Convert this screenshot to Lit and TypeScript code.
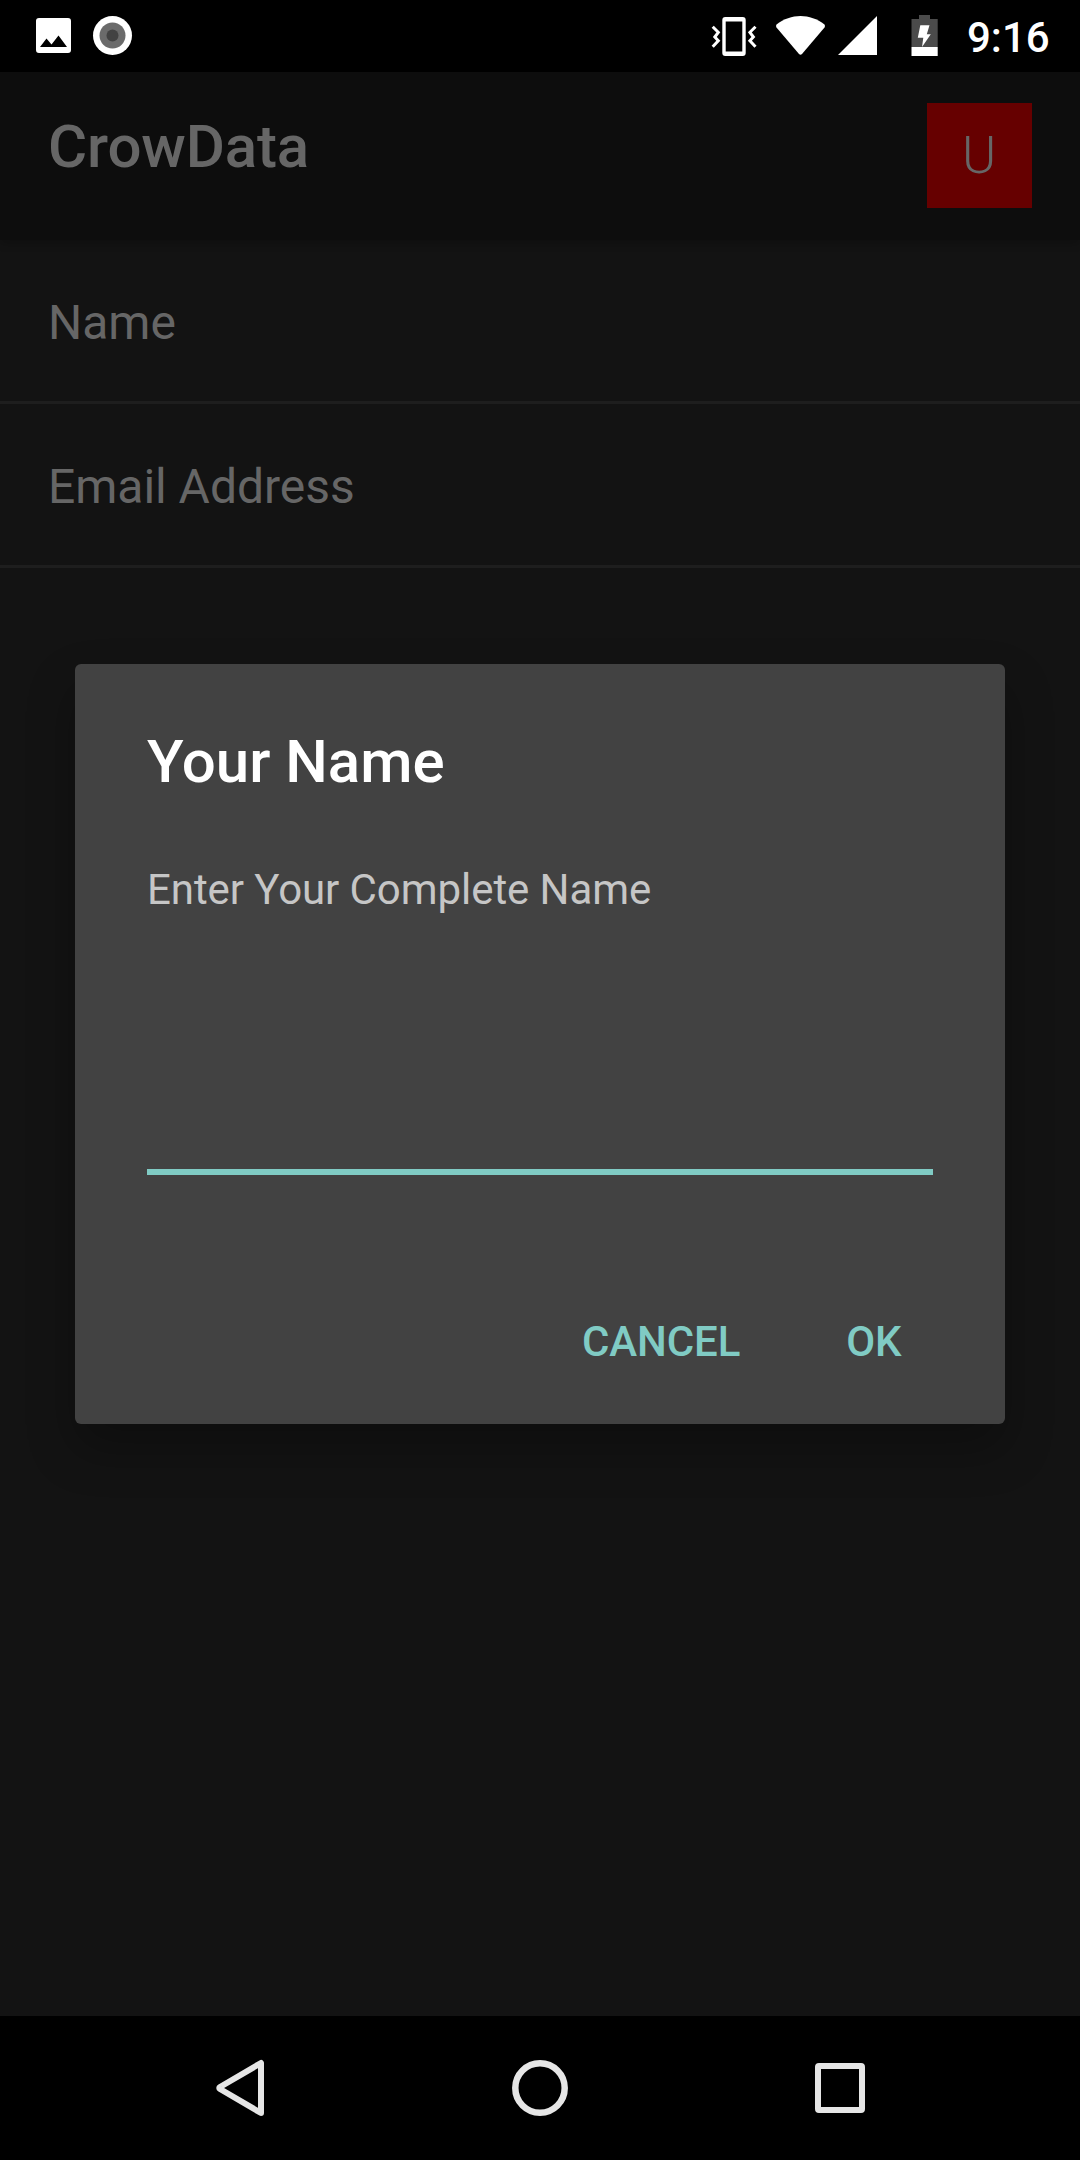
import { LitElement, html, css, svg } from "lit";
import { customElement, property } from "lit/decorators.js";

@customElement("status-bar")
class StatusBar extends LitElement {
  static styles = css`
    :host { display: flex; justify-content: space-between; height: 72px; background: #000; }
    svg { display: block; }
    .right { display: flex; }
    .clock {
      width: 113px; color: #fff; font: 500 42px/75px Roboto, sans-serif; white-space: nowrap;
    }
  `;
  render() {
    return html`
      <svg width="150" height="72" viewBox="0 0 150 72">
        <path fill="#fff" fill-rule="evenodd" d="M39 18h29a3 3 0 0 1 3 3v29a3 3 0 0 1-3 3H39a3 3 0 0 1-3-3V21a3 3 0 0 1 3-3zM40 47h27L58.500 35.600 51.500 44.500 46.500 38.500z"/>
        <circle cx="112.500" cy="35.500" r="19.500" fill="#fff"/>
        <circle cx="112.500" cy="35.500" r="13" fill="#6b6b6b"/>
        <circle cx="112.500" cy="35.500" r="6" fill="#424242"/>
      </svg>
      <div class="right">
        <svg width="259" height="72" viewBox="708 0 259 72">
          <path fill="#fff" fill-rule="evenodd" d="M725.300 17h17.400a3 3 0 0 1 3 3v33a3 3 0 0 1-3 3h-17.400a3 3 0 0 1-3-3V20a3 3 0 0 1 3-3zM725.700 21.500v30h16.600v-30z"/>
          <path d="M712.700 26.700l5.600 5.600-3.500 4.700 3.500 3.700-5.600 6M755.500 26.700l-5.600 5.600 3.500 4.700-3.500 3.700 5.600 6" fill="none" stroke="#fff" stroke-width="3"/>
          <path fill="#fff" d="M776.500 24.500C791 13 810 13 824.500 24.500q1 1.500 0 3L802 54q-1.500 1.500-3 0L776.500 27.500q-1-1.500 0-3z"/>
          <path fill="#fff" d="M838 55L877 16V55z"/>
          <path fill="#4b4b4b" d="M919 15h11v4h7.700v28H911.500V19h7.500z"/>
          <path fill="#fff" d="M911.500 47h26.200v9h-26.200zM920.300 25.300h9.200l-2.700 9h4L922 47l1.300-9.300H917.800z"/>
        </svg>
        <div class="clock">9:16</div>
      </div>`;
  }
}

@customElement("form-row")
class FormRow extends LitElement {
  @property() label = "";
  static styles = css`
    :host {
      display: block; box-sizing: border-box; height: 164px; padding-left: 48px;
      border-bottom: 3px solid #1e1e1e; color: #666; font: 400 48px/165px Roboto, sans-serif;
      letter-spacing: -0.02px;
    }
  `;
  render() {
    return html`${this.label}`;
  }
}

@customElement("name-dialog")
class NameDialog extends LitElement {
  static styles = css`
    :host {
      display: flex; flex-direction: column; box-sizing: border-box;
      width: 930px; height: 760px; padding: 60px 72px 0; border-radius: 6px;
      background: #424242; font-family: Roboto, sans-serif;
      box-shadow: 0 24px 48px rgba(0, 0, 0, 0.28);
    }
    .title { color: #fff; font-size: 60px; font-weight: 500; line-height: 75px; }
    .message { margin-top: 65px; color: #c6c6c6; font-size: 42px; line-height: 51px; letter-spacing: -0.07px; }
    .field { height: 254px; border-bottom: 6px solid #80cbc4; }
    .actions { display: flex; justify-content: flex-end; gap: 106px; margin-top: 142px; padding-right: 31.500px; }
    .action { color: #80cbc4; font-size: 42px; font-weight: 500; line-height: 50px; letter-spacing: -0.1px; }
  `;
  render() {
    return html`
      <div class="title">Your Name</div>
      <div class="message">Enter Your Complete Name</div>
      <div class="field"></div>
      <div class="actions">
        <span class="action">CANCEL</span>
        <span class="action">OK</span>
      </div>`;
  }
}

@customElement("nav-bar")
class NavBar extends LitElement {
  static styles = css`
    :host { display: flex; justify-content: center; gap: 180px; height: 144px; background: #000; }
    svg { display: block; fill: none; stroke: #e6e6e6; stroke-width: 6; stroke-linejoin: round; }
    circle { stroke-width: 6.500; }
  `;
  private icon(shape: unknown) {
    return html`<svg width="120" height="144" viewBox="0 0 120 144">${shape}</svg>`;
  }
  render() {
    return html`
      ${this.icon(svg`<path d="M81 47V97L40 73q-1.500-1 0-2z"/>`)}
      ${this.icon(svg`<circle cx="60" cy="72" r="24.700"/>`)}
      ${this.icon(svg`<rect x="38" y="50" width="44" height="44" rx="1"/>`)}`;
  }
}

@customElement("app-root")
class AppRoot extends LitElement {
  static styles = css`
    :host {
      display: flex; flex-direction: column; position: relative; width: 1080px; height: 2160px;
      overflow: hidden; background: #131313; font-family: Roboto, sans-serif;
    }
    .bar {
      display: flex; justify-content: space-between; align-items: flex-start; box-sizing: border-box;
      height: 168px; padding: 31px 48px 0; background: #0d0d0d; box-shadow: 0 4px 8px rgba(0, 0, 0, 0.2);
    }
    .title { color: #666; font-size: 60px; font-weight: 500; line-height: 87px; letter-spacing: -0.12px; }
    .avatar {
      width: 105px; height: 105px; background: #660000; color: #666;
      font-size: 52px; font-weight: 300; line-height: 105px; text-align: center; text-indent: -1px;
    }
    .list { flex: 1; }
    .overlay { position: absolute; left: 75px; top: 664px; }
  `;
  render() {
    return html`
      <status-bar></status-bar>
      <header class="bar">
        <div class="title">CrowData</div>
        <div class="avatar">U</div>
      </header>
      <main class="list">
        <form-row label="Name"></form-row>
        <form-row label="Email Address"></form-row>
      </main>
      <nav-bar></nav-bar>
      <name-dialog class="overlay"></name-dialog>`;
  }
}
